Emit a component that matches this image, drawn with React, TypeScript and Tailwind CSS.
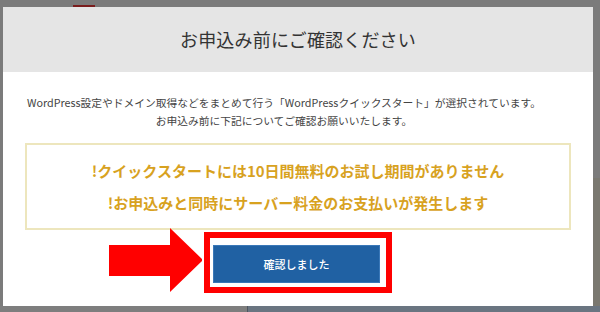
import React from "react";

const ArrowMark = () => (
  <svg width="96" height="66" viewBox="0 0 96 66" className="absolute left-[106px] top-[227px]">
    <polygon points="3,18 64,18 64,1 97,33 64,65 64,49 3,49" fill="#ff0000" />
  </svg>
);

const App = () => {
  return (
    <div
      className="relative w-[600px] h-[312px] overflow-hidden bg-[#7b7b7b]"
      style={{ fontFamily: '"Noto Sans CJK JP", "Noto Sans", sans-serif' }}
    >
      {/* page behind the overlay */}
      <div className="absolute left-[73px] top-[5px] w-[22px] h-[2px] bg-[#7a1d1d]" />
      <div className="absolute left-0 top-[306px] w-[247px] h-[6px] bg-[#7e7e7e]" />
      <div className="absolute left-[247px] top-[306px] w-[353px] h-[6px] bg-[#6a7581] border-l border-[#4f5660]" />
      <div className="absolute left-[593px] top-[178px] w-[7px] h-[128px] bg-[#7a7870]" />

      <div className="pt-[7px] pl-[3px]">
        <div className="relative w-[590px] h-[299px] bg-white flex flex-col">
          <div className="h-[65px] bg-[#e5e5e5] flex items-center justify-center">
            <h2 className="text-[18px] text-[#333] tracking-[0.01em]">お申込み前にご確認ください</h2>
          </div>

          <div className="px-[22px] flex flex-col">
            <div className="pt-[22px] pr-[28px] text-center text-[10.75px] leading-[18px] text-[#444] whitespace-nowrap">
              <p>WordPress設定やドメイン取得などをまとめて行う「WordPressクイックスタート」が選択されています。</p>
              <p>お申込み前に下記についてご確認お願いいたします。</p>
            </div>

            <div className="mt-[13px] h-[87px] border-2 border-[#ede6bd] flex flex-col items-center justify-center text-[15px] leading-[32px] font-bold text-[#d8a21f]">
              <p>!クイックスタートには10日間無料のお試し期間がありません</p>
              <p>!お申込みと同時にサーバー料金のお支払いが発生します</p>
            </div>

            <div className="mt-[2px] flex justify-center">
              <div className="w-[188px] h-[61px] border-[6px] border-[#ff0000] pt-[7px] pl-[3px]">
                <button className="w-[167px] h-[38px] bg-[#2061a3] text-white text-[11px] font-medium border border-[#3a78b8]">
                  確認しました
                </button>
              </div>
            </div>
          </div>
        </div>
      </div>

      <ArrowMark />
    </div>
  );
};

export default App;
